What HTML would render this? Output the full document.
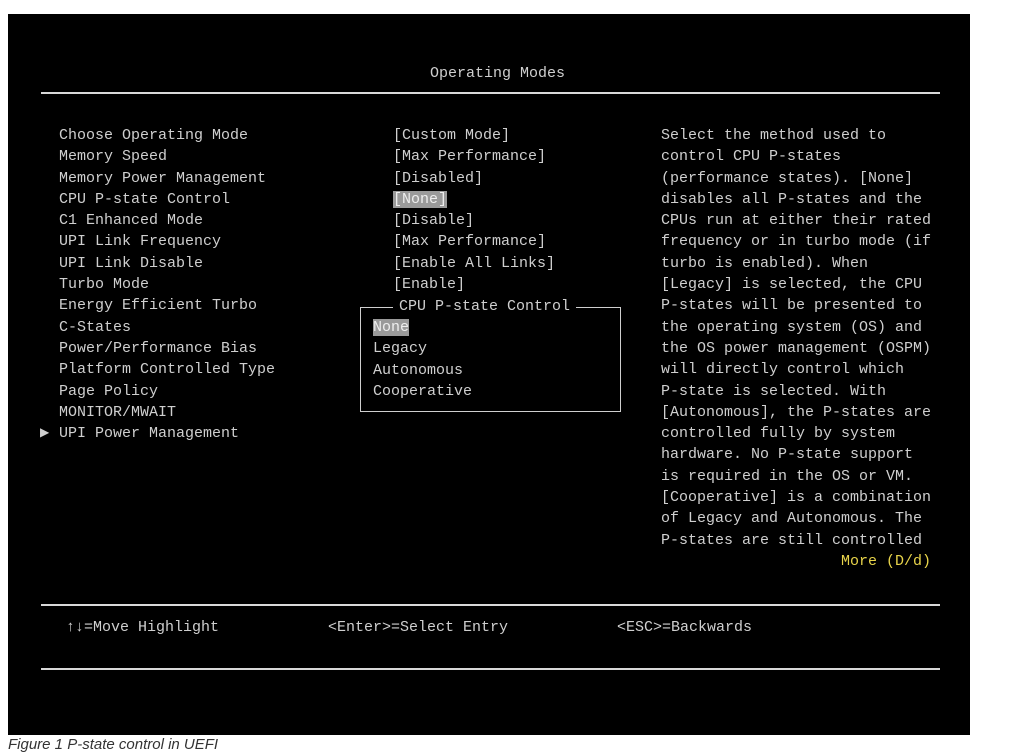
<!DOCTYPE html>
<html><head><style>
body{margin:0;width:1035px;height:751px;background:#fff;position:relative;overflow:hidden;font-family:"Liberation Mono",monospace;}
#p{position:absolute;left:8px;top:14px;width:962px;height:721px;background:#000;}
.t{position:absolute;color:#cfcfcf;font-size:15px;line-height:21.3px;white-space:pre;}
.hl{position:absolute;background:#d8d8d8;height:1.5px;}
.sel{background:#9a9a9a;color:#eee;}
#box{position:absolute;left:360px;top:307px;width:259px;height:103px;border:1.5px solid #cfcfcf;}
#cap{position:absolute;left:8px;top:736px;font-family:"Liberation Sans",sans-serif;font-style:italic;font-size:15px;color:#333;}
</style></head><body>
<div id="p"></div>
<div class="t" style="left:430px;top:63px">Operating Modes</div>
<div class="hl" style="left:41px;top:92px;width:899px"></div>
<div class="t" style="left:59px;top:125px">Choose Operating Mode
Memory Speed
Memory Power Management
CPU P-state Control
C1 Enhanced Mode
UPI Link Frequency
UPI Link Disable
Turbo Mode
Energy Efficient Turbo
C-States
Power/Performance Bias
Platform Controlled Type
Page Policy
MONITOR/MWAIT
UPI Power Management</div>
<div class="t" style="left:40px;top:423px;font-size:12px">▶</div>
<div class="t" style="left:393px;top:125px">[Custom Mode]
[Max Performance]
[Disabled]
<span class="sel">[None]</span>
[Disable]
[Max Performance]
[Enable All Links]
[Enable]</div>
<div id="box"></div>
<div class="t" style="left:393px;top:296px;background:#000;padding:0 6px">CPU P-state Control</div>
<div class="t" style="left:373px;top:317px"><span class="sel">None</span>
Legacy
Autonomous
Cooperative</div>
<div class="t" style="left:661px;top:125px">Select the method used to
control CPU P-states
(performance states). [None]
disables all P-states and the
CPUs run at either their rated
frequency or in turbo mode (if
turbo is enabled). When
[Legacy] is selected, the CPU
P-states will be presented to
the operating system (OS) and
the OS power management (OSPM)
will directly control which
P-state is selected. With
[Autonomous], the P-states are
controlled fully by system
hardware. No P-state support
is required in the OS or VM.
[Cooperative] is a combination
of Legacy and Autonomous. The
P-states are still controlled
<span style="color:#e8d44a">                    More (D/d)</span></div>
<div class="hl" style="left:41px;top:604px;width:899px"></div>
<div class="t" style="left:66px;top:617px">↑↓=Move Highlight</div>
<div class="t" style="left:328px;top:617px">&lt;Enter&gt;=Select Entry</div>
<div class="t" style="left:617px;top:617px">&lt;ESC&gt;=Backwards</div>
<div class="hl" style="left:41px;top:668px;width:899px"></div>
<div id="cap">Figure 1   P-state control in UEFI</div>
</body></html>
